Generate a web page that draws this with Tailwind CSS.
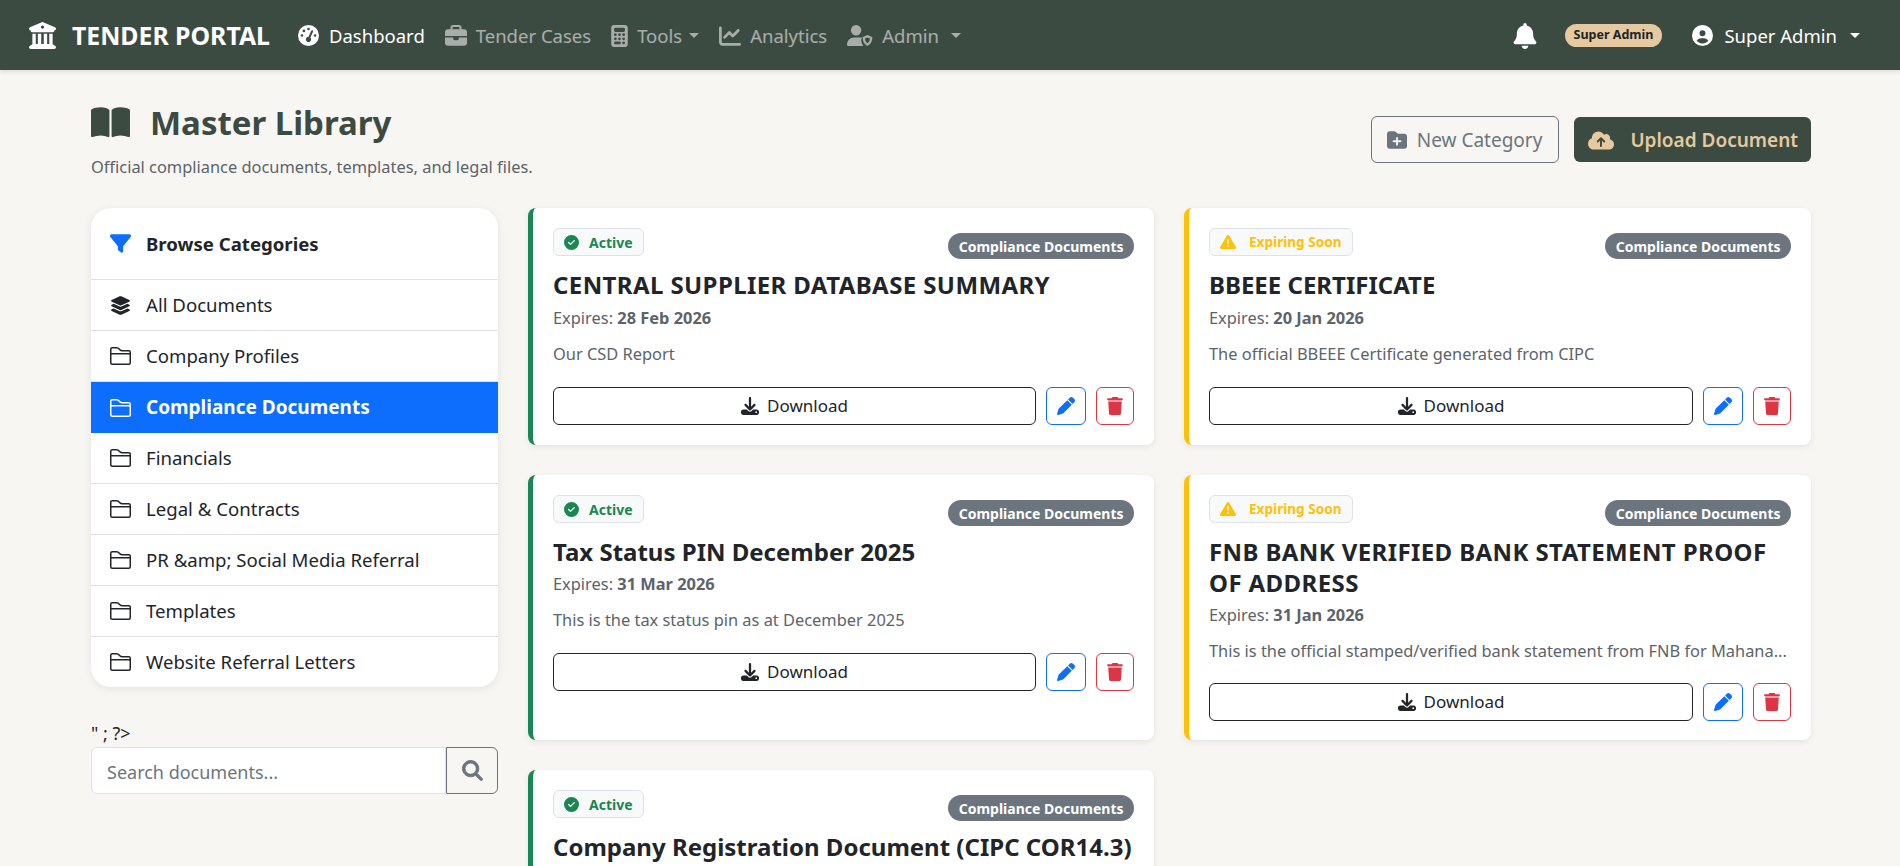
<!DOCTYPE html>
<html lang="en">
<head>
    <meta charset="UTF-8">
    <title>Master Library - Tender Portal</title>
    <script src="https://cdn.jsdelivr.net/npm/@tailwindcss/browser@4"></script>
</head>
<body class="h-screen overflow-hidden bg-[#f7f6f2] text-[#212529] font-['Noto_Sans',sans-serif]">
    <!-- icon set -->
    <svg class="hidden">
        <symbol id="i-bank" viewBox="0 0 512 512"><path d="M243.4 2.6l-224 96c-14 6-21.8 21-18.7 35.8S16.8 160 32 160v8c0 13.3 10.7 24 24 24H456c13.3 0 24-10.7 24-24v-8c15.2 0 28.3-10.7 31.3-25.6s-4.8-29.9-18.7-35.8l-224-96c-8-3.4-17.2-3.4-25.2 0zM128 224H64V420.3c-.6 .3-1.2 .7-1.8 1.1l-48 32c-11.7 7.8-17 22.4-12.9 35.9S17.9 512 32 512H480c14.1 0 26.5-9.2 30.6-22.7s-1.1-28.1-12.9-35.9l-48-32c-.6-.4-1.2-.7-1.8-1.1V224H384V416H344V224H280V416H232V224H168V416H128V224zM256 64a32 32 0 1 1 0 64 32 32 0 1 1 0-64z"/></symbol>
        <symbol id="i-gauge" viewBox="0 0 512 512"><path d="M0 256a256 256 0 1 1 512 0A256 256 0 1 1 0 256zM288 96a32 32 0 1 0 -64 0 32 32 0 1 0 64 0zM256 416c35.3 0 64-28.7 64-64c0-17.4-6.9-33.1-18.1-44.6L366 161.7c5.3-12.1-.2-26.3-12.3-31.6s-26.3 .2-31.6 12.3L257.9 288c-.6 0-1.3 0-1.9 0c-35.3 0-64 28.7-64 64s28.7 64 64 64zM176 144a32 32 0 1 0 -64 0 32 32 0 1 0 64 0zM96 288a32 32 0 1 0 0-64 32 32 0 1 0 0 64zm352-32a32 32 0 1 0 -64 0 32 32 0 1 0 64 0z"/></symbol>
        <symbol id="i-case" viewBox="0 0 512 512"><path d="M184 48H328c4.4 0 8 3.6 8 8V96H176V56c0-4.4 3.6-8 8-8zm-56 8V96H64C28.7 96 0 124.7 0 160v96H192 320 512V160c0-35.3-28.7-64-64-64H384V56c0-30.9-25.1-56-56-56H184c-30.9 0-56 25.1-56 56zM512 288H320v32c0 17.7-14.3 32-32 32H224c-17.7 0-32-14.3-32-32V288H0V416c0 35.3 28.7 64 64 64H448c35.3 0 64-28.7 64-64V288z"/></symbol>
        <symbol id="i-calc" viewBox="0 0 384 512"><path d="M64 0C28.7 0 0 28.7 0 64V448c0 35.3 28.7 64 64 64H320c35.3 0 64-28.7 64-64V64c0-35.3-28.7-64-64-64H64zM96 64H288c17.7 0 32 14.3 32 32v32c0 17.7-14.3 32-32 32H96c-17.7 0-32-14.3-32-32V96c0-17.7 14.3-32 32-32zm32 160a32 32 0 1 1 -64 0 32 32 0 1 1 64 0zM96 352a32 32 0 1 1 0-64 32 32 0 1 1 0 64zM64 416c0-17.7 14.3-32 32-32h96c17.7 0 32 14.3 32 32s-14.3 32-32 32H96c-17.7 0-32-14.3-32-32zM192 256a32 32 0 1 1 0-64 32 32 0 1 1 0 64zm32 64a32 32 0 1 1 -64 0 32 32 0 1 1 64 0zm64-64a32 32 0 1 1 0-64 32 32 0 1 1 0 64zm32 64a32 32 0 1 1 -64 0 32 32 0 1 1 64 0zM288 448a32 32 0 1 1 0-64 32 32 0 1 1 0 64z"/></symbol>
        <symbol id="i-chart" viewBox="0 0 512 512"><path d="M64 64c0-17.7-14.3-32-32-32S0 46.3 0 64V400c0 44.2 35.8 80 80 80H480c17.7 0 32-14.3 32-32s-14.3-32-32-32H80c-8.8 0-16-7.2-16-16V64zm406.6 86.6c12.5-12.5 12.5-32.8 0-45.3s-32.8-12.5-45.3 0L320 210.7l-57.4-57.4c-12.5-12.5-32.8-12.5-45.3 0l-112 112c-12.5 12.5-12.5 32.8 0 45.3s32.8 12.5 45.3 0L240 221.3l57.4 57.4c12.5 12.5 32.8 12.5 45.3 0l128-128z"/></symbol>
        <symbol id="i-shield" viewBox="0 0 640 512"><path fill-rule="evenodd" d="M224 256A128 128 0 1 0 224 0a128 128 0 1 0 0 256zm-45.7 48C79.8 304 0 383.8 0 482.3C0 498.7 13.3 512 29.7 512H400c-30-38-50-92-50-150 0-22 10-40 26-49-14-6-30-9-46-9H178.3zM504 244L392 292c-6 3-8 8-8 14 0 74 32 164 112 204 5 3 11 3 16 0 80-40 112-130 112-204 0-6-2-11-8-14L504 244zm0 60l-62 27c3 44 22 92 62 118 40-26 59-74 62-118l-62-27z"/></symbol>
        <symbol id="i-bell" viewBox="0 0 448 512"><path d="M224 0c-17.7 0-32 14.3-32 32V51.2C119 66 64 130.6 64 208v18.8c0 47-17.3 92.4-48.5 127.6l-7.4 8.3c-8.4 9.4-10.4 22.9-5.3 34.4S19.4 416 32 416H416c12.6 0 24-7.4 29.2-18.9s3.1-25-5.3-34.4l-7.4-8.3C401.3 319.2 384 273.9 384 226.8V208c0-77.4-55-142-128-156.8V32c0-17.7-14.3-32-32-32zm45.3 493.3c12-12 18.7-28.3 18.7-45.3H224 160c0 17 6.7 33.3 18.7 45.3s28.3 18.7 45.3 18.7s33.3-6.7 45.3-18.7z"/></symbol>
        <symbol id="i-user" viewBox="0 0 512 512"><path d="M399 384.2C376.9 345.8 335.4 320 288 320H224c-47.4 0-88.9 25.8-111 64.2c35.2 39.2 86.2 63.8 143 63.8s107.8-24.7 143-63.8zM0 256a256 256 0 1 1 512 0A256 256 0 1 1 0 256zm256 16a72 72 0 1 0 0-144 72 72 0 1 0 0 144z"/></symbol>
        <symbol id="i-book" viewBox="0 0 576 512"><path d="M249.6 471.5c10.8 3.8 22.4-4.1 22.4-15.5V78.6c0-4.2-1.6-8.4-5-11C247.4 52 202.4 32 144 32C93.5 32 46.3 45.3 18.1 56.1C6.8 60.5 0 71.7 0 83.8V454.1c0 11.9 12.8 20.2 24.1 16.5C55.6 460.1 105.5 448 144 448c33.9 0 79 14 105.6 23.5zm76.8 0C353 462 398.1 448 432 448c38.5 0 88.4 12.1 119.9 22.6c11.3 3.8 24.1-4.6 24.1-16.5V83.8c0-12.1-6.8-23.3-18.1-27.6C529.7 45.3 482.5 32 432 32c-58.4 0-103.4 20-123 35.6c-3.3 2.6-5 6.8-5 11V456c0 11.4 11.7 19.3 22.4 15.5z"/></symbol>
        <symbol id="i-folderplus" viewBox="0 0 512 512"><path d="M512 416c0 35.3-28.7 64-64 64H64c-35.3 0-64-28.7-64-64V96C0 60.7 28.7 32 64 32H181.5c17 0 33.3 6.7 45.3 18.7l26.5 26.5c12 12 28.3 18.7 45.3 18.7H448c35.3 0 64 28.7 64 64V416zM232 376c0 13.3 10.7 24 24 24s24-10.7 24-24V312h64c13.3 0 24-10.7 24-24s-10.7-24-24-24H280V200c0-13.3-10.7-24-24-24s-24 10.7-24 24v64H168c-13.3 0-24 10.7-24 24s10.7 24 24 24h64v64z"/></symbol>
        <symbol id="i-cloud" viewBox="0 0 640 512"><path d="M144 480C64.5 480 0 415.5 0 336c0-62.8 40.2-116.2 96.2-135.9c-.1-2.7-.2-5.4-.2-8.1c0-88.4 71.6-160 160-160c59.3 0 111 32.2 138.7 80.2C409.9 102 428.3 96 448 96c53 0 96 43 96 96c0 12.2-2.3 23.8-6.4 34.6C596 238.4 640 290.1 640 352c0 70.7-57.3 128-128 128H144zm79-217c-9.4 9.4-9.4 24.6 0 33.9s24.6 9.4 33.9 0l39-39V392c0 13.3 10.7 24 24 24s24-10.7 24-24V257.9l39 39c9.4 9.4 24.6 9.4 33.9 0s9.4-24.6 0-33.9l-80-80c-9.4-9.4-24.6-9.4-33.9 0l-80 80z"/></symbol>
        <symbol id="i-filter" viewBox="0 0 512 512"><path d="M3.9 54.9C10.5 40.9 24.5 32 40 32H472c15.5 0 29.5 8.9 36.1 22.9s4.6 30.5-5.2 42.5L320 320.9V448c0 12.1-6.8 23.2-17.7 28.6s-23.8 4.3-33.5-3l-64-48c-8.1-6-12.8-15.5-12.8-25.6V320.9L9 97.3C-.7 85.4-2.8 68.8 3.9 54.9z"/></symbol>
        <symbol id="i-layers" viewBox="0 0 576 512"><path d="M264.5 5.2c14.9-6.9 32.1-6.9 47 0l218.6 101c8.5 3.9 13.9 12.4 13.9 21.8s-5.4 17.9-13.9 21.8l-218.6 101c-14.9 6.9-32.1 6.9-47 0L45.9 149.8C37.4 145.8 32 137.3 32 128s5.4-17.9 13.9-21.8L264.5 5.2zM476.9 209.6l53.2 24.6c8.5 3.9 13.9 12.4 13.9 21.8s-5.4 17.9-13.9 21.8l-218.6 101c-14.9 6.9-32.1 6.9-47 0L45.9 277.8C37.4 273.8 32 265.3 32 256s5.4-17.9 13.9-21.8l53.2-24.6 152 70.2c23.4 10.8 50.4 10.8 73.8 0l152-70.2zm-152 198.2l152-70.2 53.2 24.6c8.5 3.9 13.9 12.4 13.9 21.8s-5.4 17.9-13.9 21.8l-218.6 101c-14.9 6.9-32.1 6.9-47 0L45.9 405.8C37.4 401.8 32 393.3 32 384s5.4-17.9 13.9-21.8l53.2-24.6 152 70.2c23.4 10.8 50.4 10.8 73.8 0z"/></symbol>
        <symbol id="i-folder" viewBox="1 2 14 12"><path d="M1 3.5A1.5 1.5 0 0 1 2.5 2h2.764c.958 0 1.76.56 2.311 1.184C7.985 3.648 8.48 4 9 4h4.5A1.5 1.5 0 0 1 15 5.5v7a1.5 1.5 0 0 1-1.5 1.5h-11A1.5 1.5 0 0 1 1 12.5v-9zM2.5 3a.5.5 0 0 0-.5.5V6h12v-.5a.5.5 0 0 0-.5-.5H9c-.964 0-1.71-.629-2.174-1.154C6.374 3.334 5.82 3 5.264 3H2.5zM14 7H2v5.5a.5.5 0 0 0 .5.5h11a.5.5 0 0 0 .5-.5V7z"/></symbol>
        <symbol id="i-search" viewBox="-12 -12 536 536"><path stroke="currentColor" stroke-width="24" d="M416 208c0 45.9-14.9 88.3-40 122.7L502.6 457.4c12.5 12.5 12.5 32.8 0 45.3s-32.8 12.5-45.3 0L330.7 376c-34.4 25.2-76.8 40-122.7 40C93.1 416 0 322.9 0 208S93.1 0 208 0S416 93.1 416 208zM208 352a144 144 0 1 0 0-288 144 144 0 1 0 0 288z"/></symbol>
        <symbol id="i-check" viewBox="0 0 512 512"><path d="M256 512A256 256 0 1 0 256 0a256 256 0 1 0 0 512zM369 209L241 337c-9.4 9.4-24.6 9.4-33.9 0l-64-64c-9.4-9.4-9.4-24.6 0-33.9s24.6-9.4 33.9 0l47 47L335 175c9.4-9.4 24.6-9.4 33.9 0s9.4 24.6 0 33.9z"/></symbol>
        <symbol id="i-warn" viewBox="0 0 512 512"><path d="M256 32c14.2 0 27.3 7.5 34.5 19.8l216 368c7.3 12.4 7.3 27.7 .2 40.1S486.3 480 472 480H40c-14.3 0-27.6-7.7-34.7-20.1s-7-27.8 .2-40.1l216-368C228.7 39.5 241.8 32 256 32zm0 128c-13.3 0-24 10.7-24 24V296c0 13.3 10.7 24 24 24s24-10.7 24-24V184c0-13.3-10.7-24-24-24zm32 224a32 32 0 1 0 -64 0 32 32 0 1 0 64 0z"/></symbol>
        <symbol id="i-download" viewBox="0 0 512 512"><path d="M288 32c0-17.7-14.3-32-32-32s-32 14.3-32 32V274.7l-73.4-73.4c-12.5-12.5-32.8-12.5-45.3 0s-12.5 32.8 0 45.3l128 128c12.5 12.5 32.8 12.5 45.3 0l128-128c12.5-12.5 12.5-32.8 0-45.3s-32.8-12.5-45.3 0L288 274.7V32zM64 352c-35.3 0-64 28.7-64 64v32c0 35.3 28.7 64 64 64H448c35.3 0 64-28.7 64-64V416c0-35.3-28.7-64-64-64H346.5l-45.3 45.3c-25 25-65.5 25-90.5 0L165.5 352H64zm368 56a24 24 0 1 1 0 48 24 24 0 1 1 0-48z"/></symbol>
        <symbol id="i-pen" viewBox="0 0 512 512"><path d="M362.7 19.3L314.3 67.7 444.3 197.7l48.4-48.4c25-25 25-65.5 0-90.5L453.3 19.3c-25-25-65.5-25-90.5 0zm-71 71L58.6 323.5c-10.4 10.4-18 23.3-22.2 37.4L1 481.2C-1.5 489.7 .8 498.8 7 505s15.3 8.5 23.7 6.1l120.3-35.4c14.1-4.2 27-11.8 37.4-22.2L421.7 220.3 291.7 90.3z"/></symbol>
        <symbol id="i-trash" viewBox="0 0 448 512"><path d="M135.2 17.7L128 32H32C14.3 32 0 46.3 0 64S14.3 96 32 96H416c17.7 0 32-14.3 32-32s-14.3-32-32-32H320l-7.2-14.3C307.4 6.8 296.3 0 284.2 0H163.8c-12.1 0-23.2 6.8-28.6 17.7zM416 128H32L53.2 467c1.6 25.3 22.6 45 47.9 45H346.9c25.3 0 46.3-19.7 47.9-45L416 128z"/></symbol>
    </svg>

    <!-- navbar -->
    <nav class="flex items-center justify-between h-[70px] pt-[1px] pl-[29px] pr-[40px] bg-[#3c4b41] shadow-[0_2px_4px_rgba(0,0,0,0.1)] text-[18.5px]">
        <div class="flex items-center">
            <a class="flex items-center gap-[16px] mr-[28px] text-white text-[24.8px] font-bold">
                <svg class="w-[27px] h-[27px] fill-current"><use href="#i-bank"/></svg>
                TENDER PORTAL
            </a>
            <a class="flex items-center gap-[10px] mr-[20px] text-white">
                <svg class="w-[21px] h-[21px] fill-current"><use href="#i-gauge"/></svg>Dashboard
            </a>
            <a class="flex items-center gap-[9px] mr-[20px] text-white/55">
                <svg class="w-[22px] h-[22px] fill-current"><use href="#i-case"/></svg>Tender Cases
            </a>
            <a class="flex items-center gap-[9px] mr-[20px] text-white/55">
                <svg class="w-[17px] h-[22px] fill-current"><use href="#i-calc"/></svg>Tools
                <span class="ml-[-2px] border-x-[5px] border-t-[5px] border-x-transparent border-t-current"></span>
            </a>
            <a class="flex items-center gap-[9px] mr-[20px] text-white/55">
                <svg class="w-[22px] h-[22px] fill-current"><use href="#i-chart"/></svg>Analytics
            </a>
            <a class="flex items-center gap-[9px] text-white/55">
                <svg class="w-[26px] h-[21px] fill-current"><use href="#i-shield"/></svg>Admin
                <span class="ml-[3px] border-x-[5px] border-t-[5px] border-x-transparent border-t-current"></span>
            </a>
        </div>
        <div class="flex items-center text-white">
            <svg class="w-[24px] h-[26px] mr-[28px] fill-current"><use href="#i-bell"/></svg>
            <span class="flex items-center h-[23px] px-[9px] mr-[30px] rounded-full bg-[#e6c99f] text-[#212529] text-[12.5px] font-bold">Super Admin</span>
            <a class="flex items-center gap-[11px]">
                <svg class="w-[21px] h-[21px] fill-current"><use href="#i-user"/></svg>Super Admin
                <span class="ml-[2px] border-x-[5px] border-t-[5px] border-x-transparent border-t-current"></span>
            </a>
        </div>
    </nav>

    <main class="pl-[91px] pr-[89px]">
        <!-- page header -->
        <div class="flex items-start justify-between pt-[32px] h-[138px]">
            <div>
                <h1 class="flex items-center gap-[20px] h-[41px] text-[#3c4b41] text-[33px] font-bold">
                    <svg class="w-[39px] h-[35px] fill-current"><use href="#i-book"/></svg>Master Library
                </h1>
                <p class="mt-[12px] text-[#5c636a] text-[16.4px]">Official compliance documents, templates, and legal files.</p>
            </div>
            <div class="flex items-center gap-[15px] mt-[14px]">
                <button class="flex items-center gap-[10px] h-[47px] pt-[1px] pl-[15px] pr-[16px] rounded-md border border-[#6c757d] text-[#6c757d] text-[19px]">
                    <svg class="w-[20px] h-[20px] fill-current"><use href="#i-folderplus"/></svg>New Category
                </button>
                <button class="flex items-center gap-[16px] h-[45px] pt-[1px] pl-[14px] pr-[13px] rounded-md bg-[#3c4b41] text-[#e6c99f] text-[19px] font-semibold">
                    <svg class="w-[26px] h-[21px] fill-current"><use href="#i-cloud"/></svg>Upload Document
                </button>
            </div>
        </div>

        <div class="flex gap-[30px] items-start">
            <!-- sidebar -->
            <aside class="w-[407px] shrink-0">
                <div class="bg-white rounded-[20px] shadow-[0_2px_8px_rgba(0,0,0,0.08)] overflow-hidden text-[18.6px]">
                    <div class="flex items-center gap-[15px] h-[72px] px-[19px] border-b border-[#dee2e6] font-bold">
                        <svg class="w-[21px] h-[21px] fill-[#0d6efd]"><use href="#i-filter"/></svg>Browse Categories
                    </div>
                    <a class="flex items-center gap-[15px] h-[51px] px-[19px] border-b border-[#dee2e6]">
                        <svg class="w-[21px] h-[19px] fill-current"><use href="#i-layers"/></svg>All Documents
                    </a>
                    <a class="flex items-center gap-[15px] h-[51px] px-[19px] border-b border-[#dee2e6]">
                        <svg class="w-[21px] h-[18px] fill-current"><use href="#i-folder"/></svg>Company Profiles
                    </a>
                    <a class="flex items-center gap-[15px] h-[51px] px-[19px] bg-[#0d6efd] text-white text-[19px] font-bold">
                        <svg class="w-[21px] h-[18px] fill-current"><use href="#i-folder"/></svg>Compliance Documents
                    </a>
                    <a class="flex items-center gap-[15px] h-[51px] px-[19px] border-b border-[#dee2e6]">
                        <svg class="w-[21px] h-[18px] fill-current"><use href="#i-folder"/></svg>Financials
                    </a>
                    <a class="flex items-center gap-[15px] h-[51px] px-[19px] border-b border-[#dee2e6]">
                        <svg class="w-[21px] h-[18px] fill-current"><use href="#i-folder"/></svg>Legal &amp; Contracts
                    </a>
                    <a class="flex items-center gap-[15px] h-[51px] px-[19px] border-b border-[#dee2e6]">
                        <svg class="w-[21px] h-[18px] fill-current"><use href="#i-folder"/></svg>PR &amp;amp; Social Media Referral
                    </a>
                    <a class="flex items-center gap-[15px] h-[51px] px-[19px] border-b border-[#dee2e6]">
                        <svg class="w-[21px] h-[18px] fill-current"><use href="#i-folder"/></svg>Templates
                    </a>
                    <a class="flex items-center gap-[15px] h-[50px] px-[19px]">
                        <svg class="w-[21px] h-[18px] fill-current"><use href="#i-folder"/></svg>Website Referral Letters
                    </a>
                </div>
                <p class="mt-[33px] h-[27px] text-[18px] leading-[27px]">" ; ?&gt;</p>
                <div class="flex h-[47px]">
                    <input type="text" placeholder="Search documents..." class="flex-1 min-w-0 px-[15px] pt-[3px] bg-white border border-[#dee2e6] rounded-l-md text-[18px] placeholder:text-[#6c757d]">
                    <button class="flex items-center justify-center w-[52px] border border-[#6c757d] rounded-r-md text-[#6c757d]">
                        <svg class="w-[21px] h-[21px] fill-current"><use href="#i-search"/></svg>
                    </button>
                </div>
            </aside>

            <!-- document cards -->
            <section class="grid grid-cols-[626px_627px] gap-[30px] items-stretch">
                <article class="flex flex-col h-[237px] px-[20px] pt-[20px] bg-white rounded-lg border-l-[5px] border-[#198754] shadow-[0_2px_6px_rgba(0,0,0,0.08)]">
                    <div class="flex items-start justify-between">
                        <span class="flex items-center gap-[10px] h-[28px] px-[10px] rounded-md border border-[#dee2e6] bg-[#f8f9fa] text-[#198754] text-[14px] font-bold">
                            <svg class="w-[15px] h-[15px] fill-current"><use href="#i-check"/></svg>Active
                        </span>
                        <span class="flex items-center h-[26px] mt-[5px] px-[10.5px] rounded-full bg-[#6c757d] text-white text-[14px] font-bold">Compliance Documents</span>
                    </div>
                    <h2 class="mt-[10px] text-[24px] leading-[31px] font-bold tracking-[0.4px]">CENTRAL SUPPLIER DATABASE SUMMARY</h2>
                    <p class="mt-[6px] text-[#5c636a] text-[16.4px] leading-[24px]">Expires: <b>28 Feb 2026</b></p>
                    <p class="mt-[12px] text-[#5c636a] text-[16.4px] leading-[24px] whitespace-nowrap">Our CSD Report</p>
                    <div class="flex gap-[10px] mt-[21px]">
                        <button class="flex-1 flex items-center justify-center gap-[8px] h-[38px] rounded-md border border-[#212529] text-[17px]">
                            <svg class="w-[18px] h-[18px] fill-current"><use href="#i-download"/></svg>Download
                        </button>
                        <button class="flex items-center justify-center w-[40px] h-[38px] rounded-md border border-[#0d6efd] text-[#0d6efd]">
                            <svg class="w-[18px] h-[18px] fill-current"><use href="#i-pen"/></svg>
                        </button>
                        <button class="flex items-center justify-center w-[38px] h-[38px] rounded-md border border-[#dc3545] text-[#dc3545]">
                            <svg class="w-[16px] h-[18px] fill-current"><use href="#i-trash"/></svg>
                        </button>
                    </div>
                </article>

                <article class="flex flex-col h-[237px] px-[20px] pt-[20px] bg-white rounded-lg border-l-[5px] border-[#ffc107] shadow-[0_2px_6px_rgba(0,0,0,0.08)]">
                    <div class="flex items-start justify-between">
                        <span class="flex items-center gap-[13px] h-[28px] px-[10px] rounded-md border border-[#dee2e6] bg-[#f8f9fa] text-[#ffc107] text-[13.6px] font-bold">
                            <svg class="w-[16px] h-[16px] fill-current"><use href="#i-warn"/></svg>Expiring Soon
                        </span>
                        <span class="flex items-center h-[26px] mt-[5px] px-[10.5px] rounded-full bg-[#6c757d] text-white text-[14px] font-bold">Compliance Documents</span>
                    </div>
                    <h2 class="mt-[10px] text-[24px] leading-[31px] font-bold">BBEEE CERTIFICATE</h2>
                    <p class="mt-[6px] text-[#5c636a] text-[16.4px] leading-[24px]">Expires: <b>20 Jan 2026</b></p>
                    <p class="mt-[12px] text-[#5c636a] text-[16.4px] leading-[24px] whitespace-nowrap">The official BBEEE Certificate generated from CIPC</p>
                    <div class="flex gap-[10px] mt-[21px]">
                        <button class="flex-1 flex items-center justify-center gap-[8px] h-[38px] rounded-md border border-[#212529] text-[17px]">
                            <svg class="w-[18px] h-[18px] fill-current"><use href="#i-download"/></svg>Download
                        </button>
                        <button class="flex items-center justify-center w-[40px] h-[38px] rounded-md border border-[#0d6efd] text-[#0d6efd]">
                            <svg class="w-[18px] h-[18px] fill-current"><use href="#i-pen"/></svg>
                        </button>
                        <button class="flex items-center justify-center w-[38px] h-[38px] rounded-md border border-[#dc3545] text-[#dc3545]">
                            <svg class="w-[16px] h-[18px] fill-current"><use href="#i-trash"/></svg>
                        </button>
                    </div>
                </article>

                <article class="flex flex-col h-[265px] px-[20px] pt-[20px] bg-white rounded-lg border-l-[5px] border-[#198754] shadow-[0_2px_6px_rgba(0,0,0,0.08)]">
                    <div class="flex items-start justify-between">
                        <span class="flex items-center gap-[10px] h-[28px] px-[10px] rounded-md border border-[#dee2e6] bg-[#f8f9fa] text-[#198754] text-[14px] font-bold">
                            <svg class="w-[15px] h-[15px] fill-current"><use href="#i-check"/></svg>Active
                        </span>
                        <span class="flex items-center h-[26px] mt-[5px] px-[10.5px] rounded-full bg-[#6c757d] text-white text-[14px] font-bold">Compliance Documents</span>
                    </div>
                    <h2 class="mt-[10px] text-[24px] leading-[31px] font-bold">Tax Status PIN December 2025</h2>
                    <p class="mt-[5px] text-[#5c636a] text-[16.4px] leading-[24px]">Expires: <b>31 Mar 2026</b></p>
                    <p class="mt-[12px] text-[#5c636a] text-[16.4px] leading-[24px] whitespace-nowrap">This is the tax status pin as at December 2025</p>
                    <div class="flex gap-[10px] mt-[21px]">
                        <button class="flex-1 flex items-center justify-center gap-[8px] h-[38px] rounded-md border border-[#212529] text-[17px]">
                            <svg class="w-[18px] h-[18px] fill-current"><use href="#i-download"/></svg>Download
                        </button>
                        <button class="flex items-center justify-center w-[40px] h-[38px] rounded-md border border-[#0d6efd] text-[#0d6efd]">
                            <svg class="w-[18px] h-[18px] fill-current"><use href="#i-pen"/></svg>
                        </button>
                        <button class="flex items-center justify-center w-[38px] h-[38px] rounded-md border border-[#dc3545] text-[#dc3545]">
                            <svg class="w-[16px] h-[18px] fill-current"><use href="#i-trash"/></svg>
                        </button>
                    </div>
                </article>

                <article class="flex flex-col h-[265px] px-[20px] pt-[20px] bg-white rounded-lg border-l-[5px] border-[#ffc107] shadow-[0_2px_6px_rgba(0,0,0,0.08)]">
                    <div class="flex items-start justify-between">
                        <span class="flex items-center gap-[13px] h-[28px] px-[10px] rounded-md border border-[#dee2e6] bg-[#f8f9fa] text-[#ffc107] text-[13.6px] font-bold">
                            <svg class="w-[16px] h-[16px] fill-current"><use href="#i-warn"/></svg>Expiring Soon
                        </span>
                        <span class="flex items-center h-[26px] mt-[5px] px-[10.5px] rounded-full bg-[#6c757d] text-white text-[14px] font-bold">Compliance Documents</span>
                    </div>
                    <h2 class="mt-[10px] text-[24px] leading-[31px] font-bold tracking-[0.4px]">FNB BANK VERIFIED BANK STATEMENT PROOF OF ADDRESS</h2>
                    <p class="mt-[5px] text-[#5c636a] text-[16.4px] leading-[24px]">Expires: <b>31 Jan 2026</b></p>
                    <p class="mt-[12px] text-[#5c636a] text-[16.4px] leading-[24px] whitespace-nowrap">This is the official stamped/verified bank statement from FNB for Mahana...</p>
                    <div class="flex gap-[10px] mt-[20px]">
                        <button class="flex-1 flex items-center justify-center gap-[8px] h-[38px] rounded-md border border-[#212529] text-[17px]">
                            <svg class="w-[18px] h-[18px] fill-current"><use href="#i-download"/></svg>Download
                        </button>
                        <button class="flex items-center justify-center w-[40px] h-[38px] rounded-md border border-[#0d6efd] text-[#0d6efd]">
                            <svg class="w-[18px] h-[18px] fill-current"><use href="#i-pen"/></svg>
                        </button>
                        <button class="flex items-center justify-center w-[38px] h-[38px] rounded-md border border-[#dc3545] text-[#dc3545]">
                            <svg class="w-[16px] h-[18px] fill-current"><use href="#i-trash"/></svg>
                        </button>
                    </div>
                </article>

                <article class="flex flex-col h-[236px] px-[20px] pt-[20px] bg-white rounded-lg border-l-[5px] border-[#198754] shadow-[0_2px_6px_rgba(0,0,0,0.08)]">
                    <div class="flex items-start justify-between">
                        <span class="flex items-center gap-[10px] h-[28px] px-[10px] rounded-md border border-[#dee2e6] bg-[#f8f9fa] text-[#198754] text-[14px] font-bold">
                            <svg class="w-[15px] h-[15px] fill-current"><use href="#i-check"/></svg>Active
                        </span>
                        <span class="flex items-center h-[26px] mt-[5px] px-[10.5px] rounded-full bg-[#6c757d] text-white text-[14px] font-bold">Compliance Documents</span>
                    </div>
                    <h2 class="mt-[10px] text-[24px] leading-[31px] font-bold">Company Registration Document (CIPC COR14.3)</h2>
                </article>
            </section>
        </div>
    </main>
</body>
</html>
